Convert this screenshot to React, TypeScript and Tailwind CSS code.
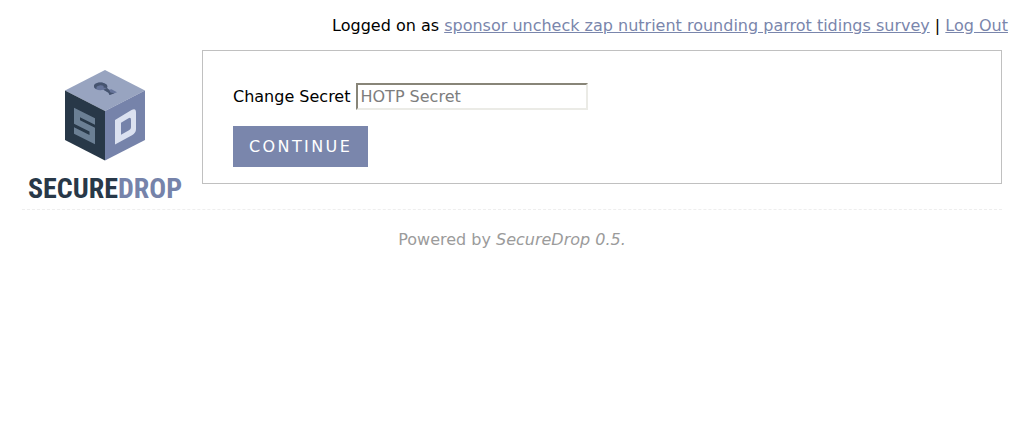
function CubeLogo() {
  return (
    <svg viewBox="0 0 80 91" className="h-[91px] w-20" aria-hidden="true">
      <path d="M40 0 80 20.5 40 41 0 20.5Z" fill="#98a4c0" />
      <path d="M0 20.5 40 41V90.5L0 70Z" fill="#283848" />
      <path d="M80 20.5 40 41V90.5L80 70Z" fill="#7683aa" />
      <path
        d="M9 37.7 30 48.3V54.7L15 47.2V50.3L30 57.8V74.3L9 63.7V57.3L24.5 65V61.5L9 53.7Z"
        fill="#6b7f94"
      />
      <path
        fillRule="evenodd"
        d="M50 50 66.5 40Q71 37.5 71 42.500V59Q71 63 67 65.300L50 74.500ZM56 52.700V64.800L64 60.300Q66 59.200 66 57.200V50Q66 46.800 63.500 48.300Z"
        fill="#dbe1f0"
      />
      <path
        d="M29 17C28.500 13.500 34 11.700 38.500 13C42 14 43 15.800 42 18L44 19.800L46.500 19.300L52 22.300L44.500 25L43.500 22.800L38.500 19.800C34 21 29.500 19.500 29 17Z"
        fill="#66749a"
      />
      <path
        d="M29 16.500C28.500 13.500 34 11.700 38.500 13C42 14 43 15.800 42 18L38.500 17.500C39.500 15.700 37 15 34.500 15.400C32 15.800 31 16.700 31.500 19C29.700 18.300 29 17.500 29 16.500Z"
        fill="#46546f"
      />
      <path d="M38.500 19.800 42 18 44 19.800 45.500 22.500 49.500 23.300 44.500 25 43.500 22.800Z" fill="#46546f" />
    </svg>
  );
}

export default function App() {
  return (
    <div className="bg-white pt-3.5 font-['DejaVu_Sans',sans-serif] text-base leading-6 text-black">
      <header className="px-4 text-right">
        Logged on as{" "}
        <a href="#account" className="text-[#7a86ac] underline">
          sponsor uncheck zap nutrient rounding parrot tidings survey
        </a>{" "}
        |{" "}
        <a href="#logout" className="text-[#7a86ac] underline">
          Log Out
        </a>
      </header>

      <div className="mx-[22px] mt-3 flex items-start border-b border-dashed border-[#eeeeee]">
        <a href="#home" className="mt-5 mr-5 flex h-[139px] w-40 shrink-0 flex-col items-center pl-1.5">
          <CubeLogo />
          <span className="mt-[11px] flex h-[34px] items-center font-['Liberation_Sans_Narrow','Roboto_Condensed',sans-serif] text-[28px] leading-none font-bold text-[#283848]">
            SECURE<span className="text-[#7683aa]">DROP</span>
          </span>
        </a>
        <main className="min-w-0 flex-1 border border-[#c0c0c0] px-[30px] pt-8 pb-4">
          <form onSubmit={(event) => event.preventDefault()}>
            <div className="flex items-center gap-1.5">
              <label htmlFor="secret">Change Secret</label>
              <input
                id="secret"
                type="text"
                placeholder="HOTP Secret"
                className="h-[27px] w-[232px] border-2 border-t-[#888578] border-r-[#ebebe6] border-b-[#ebebe6] border-l-[#888578] bg-white px-0.5 placeholder:text-[#7d7d7d]"
              />
            </div>
            <button type="submit" className="mt-4 h-[41px] bg-[#7a86ac] px-4 tracking-[0.15em] text-white">
              CONTINUE
            </button>
          </form>
        </main>
      </div>

      <footer className="pt-[18px] text-center text-[#9b9b9b]">
        Powered by <em>SecureDrop 0.5.</em>
      </footer>
    </div>
  );
}
